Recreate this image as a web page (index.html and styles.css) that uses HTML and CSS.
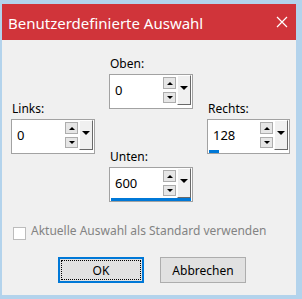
FILE: index.html
```html
<!DOCTYPE html>
<html lang="de">
<head>
    <meta charset="UTF-8">
    <title>Benutzerdefinierte Auswahl</title>
    <link rel="stylesheet" href="styles.css">
</head>
<body>

<div class="window">
    <div class="titlebar">
        <span class="title">Benutzerdefinierte Auswahl</span>
        <span class="close"><svg width="12" height="12" viewBox="0 0 12 12"><path d="M1 1L11 11M11 1L1 11" stroke="white" stroke-width="1.2" fill="none"/></svg></span>
    </div>

    <div class="content">
        <div class="fields">
            <div class="field oben">
                <label>Oben:</label>
                <div class="spin">
                    <div class="spin-row">
                        <span class="value">0</span>
                        <div class="arrows">
                            <span class="arrow up"><i></i></span>
                            <span class="arrow down"><i></i></span>
                        </div>
                        <span class="drop"><i></i></span>
                    </div>
                    <div class="track"></div>
                </div>
            </div>

            <div class="field links">
                <label>Links:</label>
                <div class="spin">
                    <div class="spin-row">
                        <span class="value">0</span>
                        <div class="arrows">
                            <span class="arrow up"><i></i></span>
                            <span class="arrow down"><i></i></span>
                        </div>
                        <span class="drop"><i></i></span>
                    </div>
                    <div class="track"></div>
                </div>
            </div>

            <div class="field rechts">
                <label>Rechts:</label>
                <div class="spin">
                    <div class="spin-row">
                        <span class="value">128</span>
                        <div class="arrows">
                            <span class="arrow up"><i></i></span>
                            <span class="arrow down"><i></i></span>
                        </div>
                        <span class="drop"><i></i></span>
                    </div>
                    <div class="track"><div class="bar" style="width: 10px"></div></div>
                </div>
            </div>

            <div class="field unten">
                <label>Unten:</label>
                <div class="spin">
                    <div class="spin-row">
                        <span class="value">600</span>
                        <div class="arrows">
                            <span class="arrow up"><i></i></span>
                            <span class="arrow down"><i></i></span>
                        </div>
                        <span class="drop"><i></i></span>
                    </div>
                    <div class="track"><div class="bar" style="width: 100%"></div></div>
                </div>
            </div>
        </div>

        <div class="check">
            <span class="box"></span>
            <span class="check-label">Aktuelle Auswahl als Standard verwenden</span>
        </div>

        <div class="buttons">
            <button class="btn default"><span>OK</span></button>
            <button class="btn">Abbrechen</button>
        </div>
    </div>
</div>

</body>
</html>
```

FILE: styles.css
```css
html, body {
    margin: 0;
    padding: 0;
}
body {
    width: 302px;
    height: 299px;
    box-sizing: border-box;
    padding: 4px 6px 4px 2px;
    background: #b3d3ec;
    font-family: "Noto Sans", "Open Sans", sans-serif;
    font-size: 12px;
    color: #000;
    overflow: hidden;
}
.window {
    height: 100%;
    display: flex;
    flex-direction: column;
    background: #f0f0f0;
}
.titlebar {
    height: 36px;
    background: #d0343a;
    color: #fff;
    display: flex;
    align-items: center;
    justify-content: space-between;
    padding: 0 0 0 6px;
    flex-shrink: 0;
}
.title {
    font-size: 15px;
    line-height: 20px;
    margin-top: 1px;
}
.close {
    display: flex;
    align-items: center;
    justify-content: center;
    width: 28px;
    height: 36px;
}
.close svg {
    display: block;
}
.content {
    flex: 1;
    padding-top: 16px;
}

/* eingabefelder im kreuz */
.fields {
    display: grid;
    grid-template-columns: 84px 84px 83px;
    grid-template-rows: 45px 8px 40px 5px 48px;
    column-gap: 14px;
    padding-left: 9px;
}
.field label {
    display: block;
    height: 16px;
    line-height: 16px;
    margin-bottom: 2px;
    padding-left: 1px;
}
.oben {
    grid-column: 2;
    grid-row: 1 / 3;
}
.links {
    grid-column: 1;
    grid-row: 2 / 5;
}
.rechts {
    grid-column: 3;
    grid-row: 2 / 5;
}
.unten {
    grid-column: 2;
    grid-row: 4 / 6;
}
.spin {
    height: 35px;
    box-sizing: border-box;
    border: 1px solid #a2a2a2;
    background: #fff;
    display: flex;
    flex-direction: column;
}
.spin-row {
    display: flex;
    height: 30px;
}
.value {
    flex: 1;
    padding-left: 5px;
    line-height: 30px;
    font-size: 13px;
}
.arrows {
    width: 13px;
    display: flex;
    flex-direction: column;
    padding-top: 2px;
    gap: 3px;
    margin-right: 1px;
}
.arrow {
    box-sizing: border-box;
    height: 12px;
    border: 1px solid #adadad;
    background: #e6e6e6;
    display: flex;
    align-items: center;
    justify-content: center;
}
.arrow.down {
    height: 11px;
}
.arrow i {
    width: 0;
    height: 0;
    border-left: 3px solid transparent;
    border-right: 3px solid transparent;
}
.up i {
    border-bottom: 3px solid #000;
}
.down i {
    border-top: 3px solid #000;
}
.drop {
    width: 14px;
    height: 30px;
    box-sizing: border-box;
    border-top: 1px solid #fff;
    border-left: 1px solid #fff;
    border-right: 1px solid #696969;
    border-bottom: 1px solid #696969;
    background: #f0f0f0;
    margin-right: 1px;
    display: flex;
    justify-content: center;
}
.drop i {
    margin-top: 10px;
    width: 0;
    height: 0;
    border-left: 4px solid transparent;
    border-right: 4px solid transparent;
    border-top: 4px solid #000;
}
.track {
    height: 3px;
    margin: 0 1px;
}
.bar {
    height: 3px;
    background: #0078d7;
}

/* checkbox */
.check {
    display: flex;
    align-items: flex-start;
    margin-top: 21px;
    padding-left: 11px;
    line-height: 16px;
}
.box {
    width: 13px;
    height: 13px;
    box-sizing: border-box;
    border: 1px solid #bcbcbc;
    background: #fff;
    margin-top: 4px;
}
.check-label {
    margin-left: 5px;
    color: #838383;
}

/* knoepfe */
.buttons {
    display: flex;
    gap: 16px;
    padding-left: 56px;
    margin-top: 17px;
}
.btn {
    width: 86px;
    height: 26px;
    box-sizing: border-box;
    border: 1px solid #adadad;
    background: #e1e1e1;
    font-family: inherit;
    font-size: 12px;
    color: #000;
    padding: 0;
}
.btn.default {
    border: 2px solid #0078d7;
    padding: 1px;
}
.btn.default span {
    display: flex;
    align-items: center;
    justify-content: center;
    height: 100%;
    border: 1px dotted #000;
    box-sizing: border-box;
}
```
